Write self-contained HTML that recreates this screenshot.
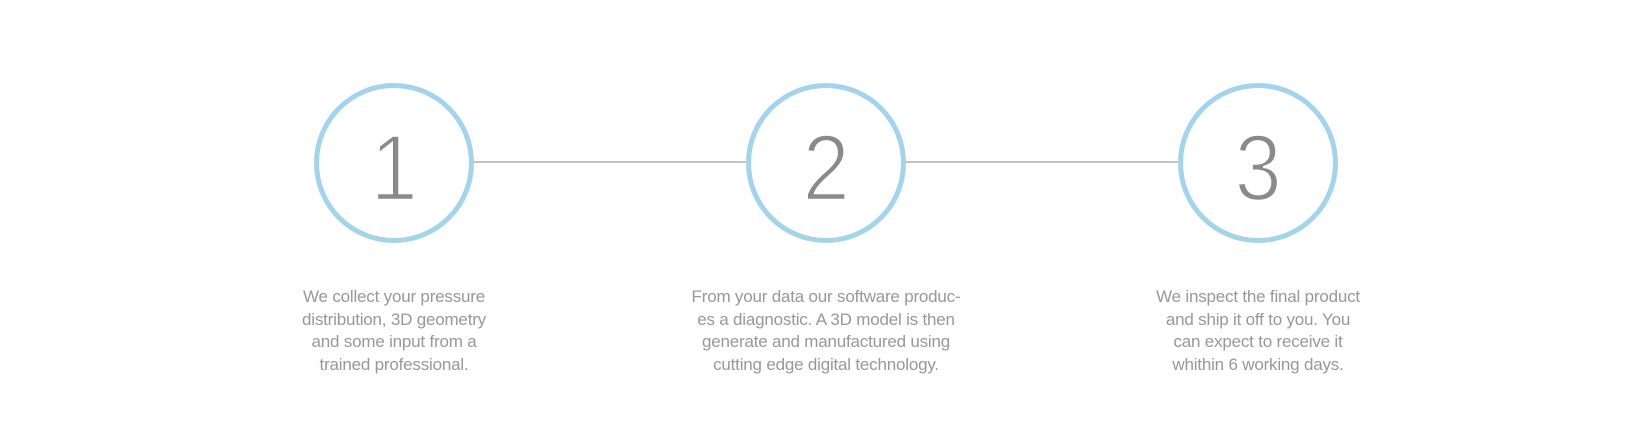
<!DOCTYPE html>
<html><head><meta charset="utf-8"><style>
html,body{margin:0;padding:0;background:#fff;width:1632px;height:438px;overflow:hidden;position:relative;font-family:"Liberation Sans",sans-serif}
.line{position:absolute;top:161px;height:2px;background:#c4c4c4}
.c{position:absolute;top:83px;width:150px;height:150px;border:5px solid #a4d3ec;border-radius:50%;text-align:center;line-height:160px;font-size:94px;color:#8a8a8a;-webkit-text-stroke:2.4px #fff;paint-order:normal}
.c span{display:inline-block;transform:scaleX(0.9)}
.t{position:absolute;top:286px;width:340px;text-align:center;font-size:17px;line-height:22.5px;color:#989898;letter-spacing:-0.2px}
</style></head><body>
<div class="line" style="left:474px;width:272px"></div>
<div class="line" style="left:906px;width:272px"></div>
<div class="c" style="left:314px"><span>1</span></div>
<div class="c" style="left:746px"><span>2</span></div>
<div class="c" style="left:1178px"><span>3</span></div>
<div class="t" style="left:224px">We collect your pressure<br>distribution, 3D geometry<br>and some input from a<br>trained professional.</div>
<div class="t" style="left:656px">From your data our software produc-<br>es a diagnostic. A 3D model is then<br>generate and manufactured using<br>cutting edge digital technology.</div>
<div class="t" style="left:1088px">We inspect the final product<br>and ship it off to you. You<br>can expect to receive it<br>whithin 6 working days.</div>
</body></html>
